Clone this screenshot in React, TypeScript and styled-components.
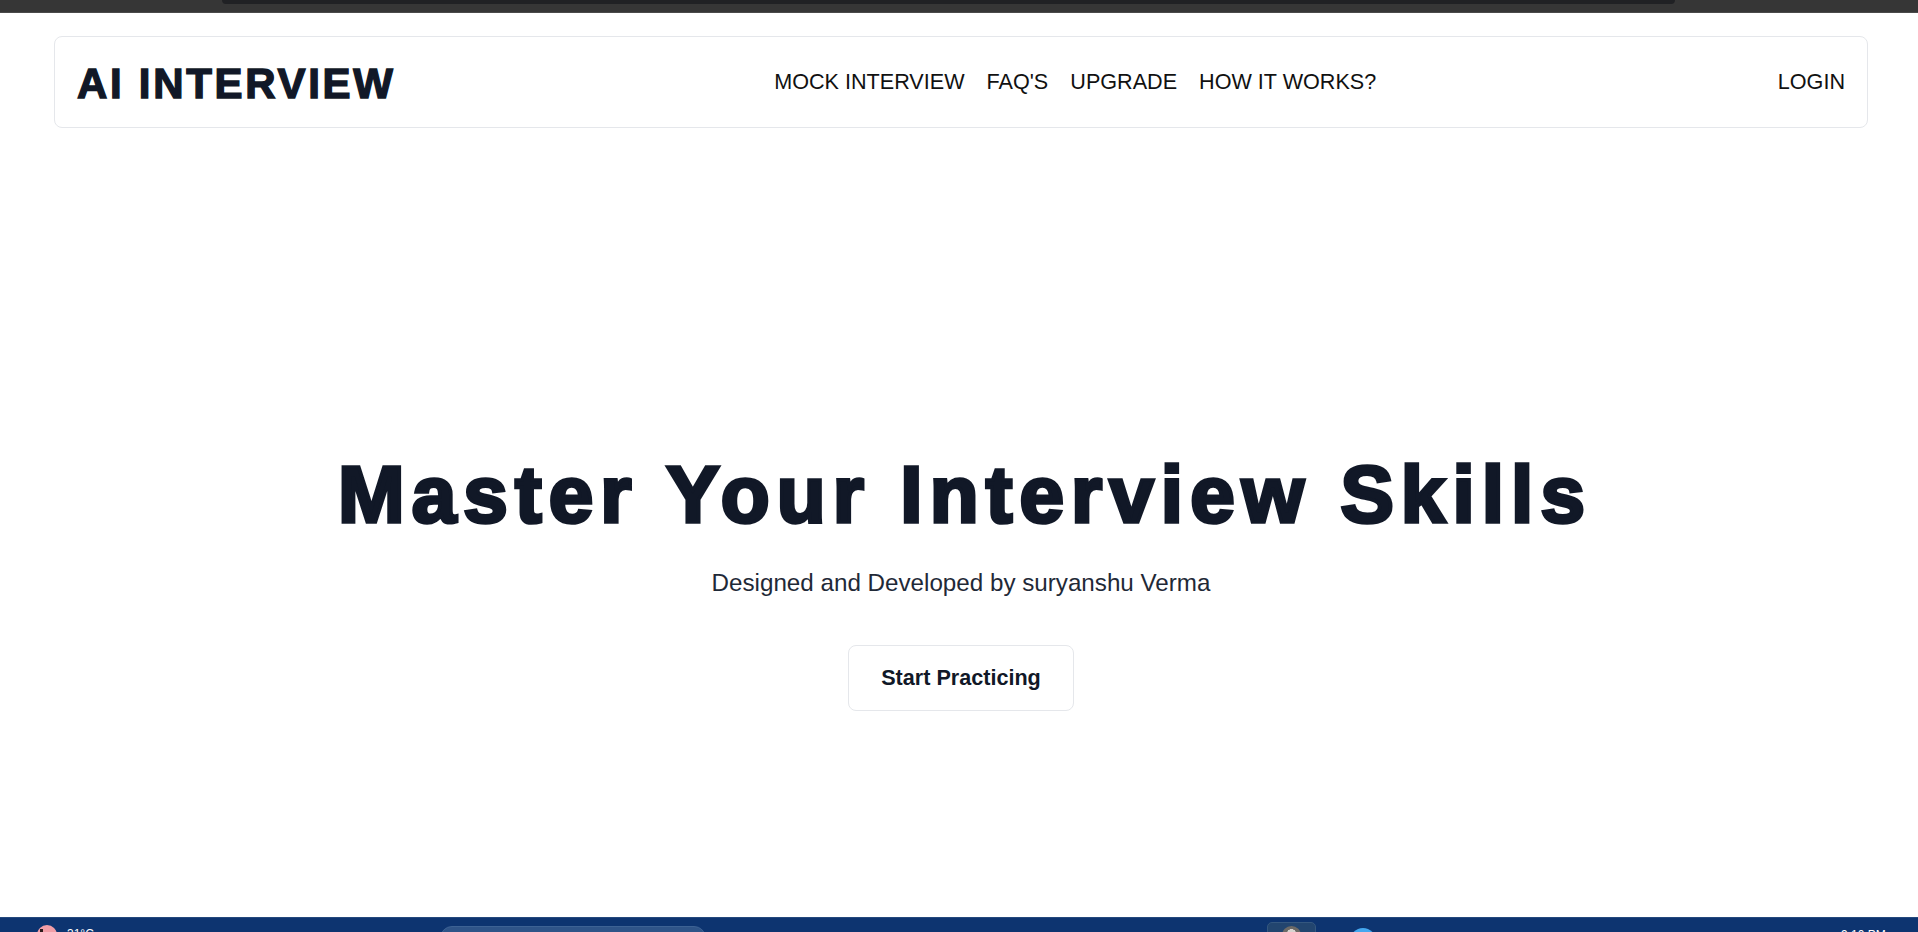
import React from "react";
import styled, { createGlobalStyle } from "styled-components";

const GlobalStyle = createGlobalStyle`
  * { box-sizing: border-box; }
  html, body { margin: 0; padding: 0; background: #ffffff; }
  body { font-family: "Liberation Sans", Arial, sans-serif; }
  #root { height: 932px; }
`;

const Page = styled.div`
  height: 932px;
  display: flex;
  flex-direction: column;
  overflow: hidden;
`;

const BrowserStrip = styled.div`
  flex: 0 0 13px;
  background: #363636;
  border-bottom: 1px solid #4a4a4a;
  display: flex;
  align-items: flex-start;
  padding-left: 222px;
`;

const StripTab = styled.div`
  width: 1453px;
  height: 4px;
  background: #202124;
  border-radius: 0 0 6px 6px;
`;

const Main = styled.main`
  flex: 1;
  display: flex;
  flex-direction: column;
  padding: 23px 50px 0 54px;
`;

const NavCard = styled.header`
  height: 92px;
  border: 1px solid #e5e7eb;
  border-radius: 8px;
  padding: 0 22px;
  display: flex;
  align-items: center;
  justify-content: space-between;
`;

const Logo = styled.div`
  font-family: "Liberation Sans", Arial, sans-serif;
  font-weight: 700;
  font-size: 42px;
  line-height: 48px;
  letter-spacing: 2.7px;
  color: #111827;
  -webkit-text-stroke: 1.4px #111827;
  padding-top: 3px;
`;

const NavLinks = styled.nav`
  display: flex;
  gap: 22px;
  margin-right: 23px;
`;

const NavLink = styled.a`
  font-size: 21.6px;
  line-height: 28px;
  color: #111111;
  text-decoration: none;
  cursor: pointer;
`;

const Hero = styled.section`
  display: flex;
  flex-direction: column;
  align-items: center;
  padding-top: 327px;
`;

const Title = styled.h1`
  margin: 0 0 0 8px;
  font-family: "Liberation Sans", Arial, sans-serif;
  font-weight: 700;
  font-size: 80px;
  line-height: 80px;
  letter-spacing: 7.1px;
  color: #111827;
  -webkit-text-stroke: 3.6px #111827;
  white-space: nowrap;
`;

const Subtitle = styled.p`
  margin: 32px 0 0;
  font-size: 24.2px;
  line-height: 32px;
  color: #1f2937;
`;

const StartButton = styled.button`
  margin-top: 46px;
  padding: 18px 32px;
  font-family: "Liberation Sans", Arial, sans-serif;
  font-weight: 700;
  font-size: 21.6px;
  line-height: 28px;
  color: #111827;
  background: #ffffff;
  border: 1px solid #e5e7eb;
  border-radius: 8px;
  cursor: pointer;
`;

const Taskbar = styled.footer`
  flex: 0 0 15px;
  background: #0d3470;
  border-top: 1px solid #24497d;
  display: flex;
  align-items: flex-start;
  overflow: hidden;
`;

const TaskItem = styled.div<{ $ml: number; $mt: number }>`
  margin-left: ${(p) => p.$ml}px;
  margin-top: ${(p) => p.$mt}px;
  flex: 0 0 auto;
`;

const WeatherIcon = styled.div`
  width: 20px;
  height: 20px;
  border-radius: 50%;
  background: #f29ea7;
  position: relative;
  &::after {
    content: "";
    position: absolute;
    left: 3px;
    top: 4px;
    width: 3px;
    height: 6px;
    background: #2b1b1b;
  }
`;

const TaskText = styled.div<{ $w: number }>`
  width: ${(p) => p.$w}px;
  font-size: 12px;
  line-height: 14px;
  color: #ffffff;
  font-family: "Liberation Sans", Arial, sans-serif;
`;

const SearchBox = styled.div`
  width: 266px;
  height: 24px;
  border-radius: 12px;
  background: #2f5488;
  border: 1px solid #3d6294;
`;

const ActiveApp = styled.div`
  width: 49px;
  height: 24px;
  border-radius: 5px;
  background: #22456f;
  border: 1px solid #34577f;
  display: flex;
  justify-content: center;
  padding-top: 3px;
`;

const Avatar = styled.div`
  width: 19px;
  height: 19px;
  border-radius: 50%;
  background: radial-gradient(circle at 50% 40%, #d8d4d0 0 30%, #6d6a66 31% 100%);
`;

const BlueBadge = styled.div`
  width: 26px;
  height: 26px;
  border-radius: 50%;
  background: #45a8f0;
  position: relative;
  &::after {
    content: "";
    position: absolute;
    left: 10px;
    top: 4px;
    width: 6px;
    height: 8px;
    border-top: 2px solid #0d2a55;
    border-right: 2px solid #0d2a55;
  }
`;

export default function App() {
  return (
    <>
      <GlobalStyle />
      <Page>
        <BrowserStrip>
          <StripTab />
        </BrowserStrip>
        <Main>
          <NavCard>
            <Logo>AI INTERVIEW</Logo>
            <NavLinks>
              <NavLink>MOCK INTERVIEW</NavLink>
              <NavLink>FAQ'S</NavLink>
              <NavLink>UPGRADE</NavLink>
              <NavLink>HOW IT WORKS?</NavLink>
            </NavLinks>
            <NavLink>LOGIN</NavLink>
          </NavCard>
          <Hero>
            <Title>Master Your Interview Skills</Title>
            <Subtitle>Designed and Developed by suryanshu Verma</Subtitle>
            <StartButton>Start Practicing</StartButton>
          </Hero>
        </Main>
        <Taskbar>
          <TaskItem $ml={37} $mt={7}>
            <WeatherIcon />
          </TaskItem>
          <TaskItem $ml={10} $mt={9}>
            <TaskText $w={30}>31°C</TaskText>
          </TaskItem>
          <TaskItem $ml={343} $mt={8}>
            <SearchBox />
          </TaskItem>
          <TaskItem $ml={561} $mt={4}>
            <ActiveApp>
              <Avatar />
            </ActiveApp>
          </TaskItem>
          <TaskItem $ml={34} $mt={10}>
            <BlueBadge />
          </TaskItem>
          <TaskItem $ml={465} $mt={10}>
            <TaskText $w={60}>9:10 PM</TaskText>
          </TaskItem>
        </Taskbar>
      </Page>
    </>
  );
}
